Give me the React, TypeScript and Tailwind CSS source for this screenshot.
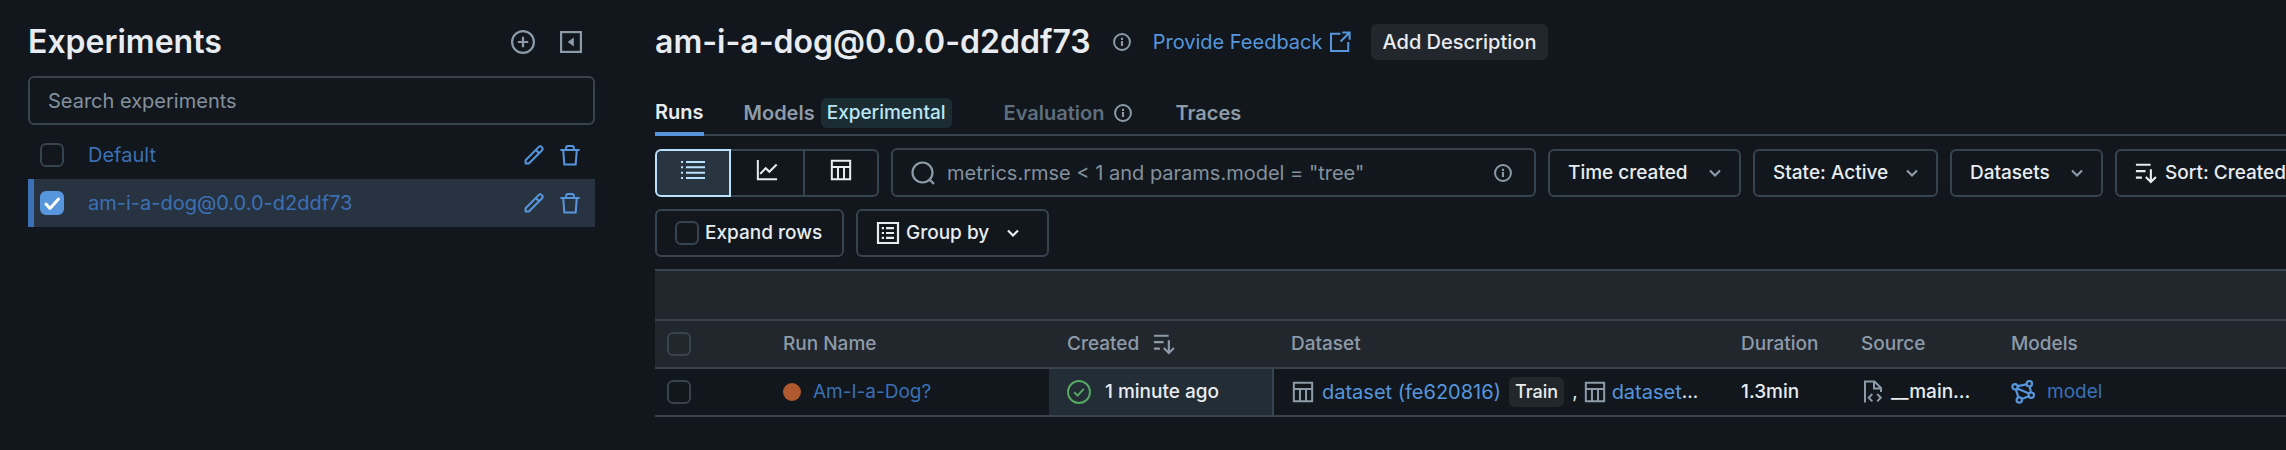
import React from "react";

type IconProps = { className?: string };

function Svg({ className, children }: IconProps & { children: React.ReactNode }) {
  return (
    <svg viewBox="0 0 24 24" fill="none" stroke="currentColor" strokeWidth={2.2} aria-hidden="true" className={`shrink-0 ${className ?? "size-6"}`}>
      {children}
    </svg>
  );
}

const PlusCircle = (p: IconProps) => (
  <Svg {...p}>
    <circle cx="12" cy="12" r="10.9" />
    <path d="M12 6.8v10.4M6.8 12h10.4" />
  </Svg>
);
const Collapse = (p: IconProps) => (
  <Svg {...p}>
    <rect x="2.1" y="2.1" width="19.8" height="19.8" />
    <path d="M14.8 7.4v9.2L8.600 12z" fill="currentColor" stroke="none" />
  </Svg>
);
const Pencil = (p: IconProps) => (
  <Svg {...p}>
    <path strokeLinejoin="round" d="M2.800 17.700 17 3.400a2.500 2.500 0 0 1 3.600 3.600L6.400 21.200H2.800zM14 6.500l3.500 3.500" />
  </Svg>
);
const Trash = (p: IconProps) => (
  <Svg {...p}>
    <path d="M1.5 6.500h21M7.8 6.500V4a1.800 1.800 0 0 1 1.800-1.800h4.800A1.800 1.800 0 0 1 16.200 4v2.500M4.600 6.500l1.200 15.800h12.400l1.200-15.800" />
  </Svg>
);
const Info = (p: IconProps) => (
  <Svg {...p}>
    <circle cx="12" cy="12" r="10.6" strokeWidth="2.6" />
    <path d="M12 10.8v6.4M12 6.4v2.8" strokeWidth="2.8" />
  </Svg>
);
const External = (p: IconProps) => (
  <Svg {...p}>
    <path d="M12.5 3H2.2v18.8H21V12M14.5 1.6h8v8M22 2.1 12.6 11.500" />
  </Svg>
);
const ListIcon = (p: IconProps) => (
  <Svg {...p}>
    <path strokeWidth="2" d="M5 3h19M5 8.300h19M5 13.700h19M5 19h19M0 3h2M0 8.300h2M0 13.700h2M0 19h2" />
  </Svg>
);
const Chart = (p: IconProps) => (
  <Svg {...p}>
    <path d="M2 1v21h21M4.600 16.200l6-6.200 4 4L22.500 6" />
  </Svg>
);
const TableIcon = (p: IconProps) => (
  <Svg {...p}>
    <path d="M2 2h20v20H2zM2 8.600h20M8.700 8.600V22M15.300 8.600V22" />
  </Svg>
);
const GroupIcon = (p: IconProps) => (
  <Svg {...p}>
    <path d="M2 2h20v20H2zM10 7.200h8M10 12h8M10 16.800h8M5.800 7.200H8M5.800 12H8M5.800 16.800H8" />
  </Svg>
);
const SearchIcon = (p: IconProps) => (
  <Svg {...p}>
    <circle cx="11.500" cy="11.500" r="10" />
    <path d="m18.600 18.600 4.400 4.400" />
  </Svg>
);
const Chevron = (p: IconProps) => (
  <Svg {...p}>
    <path strokeWidth="4.400" d="m2 7 10 10L22 7" />
  </Svg>
);
const SortDesc = (p: IconProps) => (
  <Svg {...p}>
    <path strokeWidth="2.300" d="M1 3h16M1 10h10.500M1 17h6.500M17.300 8v13.500M11.800 16.300l5.500 5.500 5.500-5.500" />
  </Svg>
);
const CheckCircle = (p: IconProps) => (
  <Svg {...p}>
    <circle cx="12" cy="12" r="11" strokeWidth="1.900" />
    <path strokeWidth="2" d="m7.200 12.200 3.400 3.400 6.200-6.800" />
  </Svg>
);
const FileCode = (p: IconProps) => (
  <Svg {...p}>
    <path strokeWidth="2" d="M4 22.500V1.500h9.500L20 8v4M13 1.500v7h7M11.300 14l-3.600 3.700 3.600 3.700M16.200 14l3.600 3.700-3.600 3.700" />
  </Svg>
);
const ModelIcon = (p: IconProps) => (
  <Svg {...p}>
    <circle cx="4" cy="6.800" r="2.700" />
    <circle cx="18.300" cy="3.700" r="2.700" />
    <circle cx="20.300" cy="15.200" r="2.700" />
    <circle cx="8.300" cy="20" r="2.700" />
    <path d="m6.600 6.200 9.100-1.900M18.700 6.400l1.200 6.100M4.900 9.400l2.500 8M6.200 8.400l11.900 5.200M10.800 19l7-2.800" />
  </Svg>
);

function Check({ label, checked = false, className = "" }: { label: string; checked?: boolean; className?: string }) {
  return (
    <span className="relative flex size-6 shrink-0">
      <input
        type="checkbox"
        aria-label={label}
        defaultChecked={checked}
        className={`peer size-6 appearance-none rounded-md border-2 border-[#37444f] checked:border-[#5796dc] checked:bg-[#5796dc] ${className}`}
      />
      <svg viewBox="0 0 24 24" fill="none" stroke="white" strokeWidth="3" strokeLinecap="round" strokeLinejoin="round" className="pointer-events-none absolute inset-0 hidden size-6 peer-checked:block">
        <path d="m6 13 4 4.500L18.500 8" />
      </svg>
    </span>
  );
}

function ExperimentRow({ name, selected = false }: { name: string; selected?: boolean }) {
  return (
    <li className={`flex h-12 items-center border-l-6 pr-3.5 pl-1.5 ${selected ? "border-[#3c70b4] bg-[#283341]" : "border-transparent"}`}>
      <Check label={`Select ${name}`} checked={selected} />
      <a href="#" className="ml-6 flex-1 text-[#3c70b4]">{name}</a>
      <button aria-label={`Rename ${name}`} className="text-[#5796dc]"><Pencil className="size-[22px]" /></button>
      <button aria-label={`Delete ${name}`} className="ml-3.5 text-[#5796dc]"><Trash className="size-[22px]" /></button>
    </li>
  );
}

function Dropdown({ label, width }: { label: string; width: string }) {
  return (
    <button className={`flex h-12 shrink-0 items-center justify-between rounded-md border-2 border-[#37444f] px-[18px] text-[19px] font-medium ${width}`}>
      {label}
      <Chevron className="size-3 text-[#8d9ba9]" />
    </button>
  );
}

export default function App() {
  return (
    <div className="flex min-h-screen overflow-hidden bg-[#11171c] font-[Inter,sans-serif] text-[20px] leading-6 text-[#e8ecf0]">
      <aside className="ml-7 w-[567px] shrink-0 pt-5">
        <div className="flex h-11 items-center pr-3">
          <h1 className="flex-1 text-[32px] leading-10 font-semibold">Experiments</h1>
          <button aria-label="Create experiment" className="text-[#8d9ba9]"><PlusCircle /></button>
          <button aria-label="Hide experiment list" className="ml-6 text-[#8d9ba9]"><Collapse /></button>
        </div>
        <input
          type="text"
          aria-label="Search experiments"
          placeholder="Search experiments"
          className="mt-3 h-[49px] w-full rounded-md border-2 border-[#37444f] px-[18px] placeholder:text-[#84919e]"
        />
        <ul className="mt-1.5">
          <ExperimentRow name="Default" />
          <ExperimentRow name="am-i-a-dog@0.0.0-d2ddf73" selected />
        </ul>
      </aside>

      <main className="ml-[60px] min-w-0 flex-1 overflow-hidden pt-5">
        <header className="flex h-11 items-center">
          <h2 className="text-[32px] leading-10 font-semibold">am-i-a-dog@0.0.0-d2ddf73</h2>
          <button aria-label="Experiment details" className="ml-[22px] text-[#8d9ba9]"><Info className="size-[18px]" /></button>
          <a href="#" className="ml-[22px] flex items-center gap-1.5 text-[#5796dc]">
            Provide Feedback
            <External className="size-[22px]" />
          </a>
          <button className="ml-5 h-9 rounded-md bg-[#22272e] px-3 font-medium">Add Description</button>
        </header>

        <nav className="mt-7 flex h-11 border-b-2 border-[#37444f] font-semibold text-[#8d9ba9]">
          <a href="#" className="-mb-0.5 flex items-center border-b-4 border-[#5796dc] text-[#e8ecf0]">Runs</a>
          <a href="#" className="ml-10 flex items-center gap-1.5">
            Models
            <span className="rounded-md bg-[#1b2c33] px-1.5 py-[3px] text-[19px] font-medium text-[#bae6f5]">Experimental</span>
          </a>
          <a href="#" className="ml-[52px] flex items-center gap-2.5 text-[#5f6e7d]">
            Evaluation
            <Info className="size-[18px] text-[#8d9ba9]" />
          </a>
          <a href="#" className="ml-[43px] flex items-center">Traces</a>
        </nav>

        <div className="mt-3 flex items-end gap-3">
          <div role="group" aria-label="View" className="flex h-12 w-56 shrink-0">
            <button aria-label="Table view" className="flex flex-1 justify-center rounded-l-md border-2 border-[#bae1fc] bg-[#283541] pt-2 text-[#bae1fc]"><ListIcon /></button>
            <button aria-label="Chart view" className="flex flex-1 justify-center border-y-2 border-[#37444f] pt-2"><Chart className="size-[22px]" /></button>
            <button aria-label="Artifact view" className="flex flex-1 justify-center rounded-r-md border-2 border-[#37444f] pt-2"><TableIcon className="size-[22px]" /></button>
          </div>
          <div className="flex h-[49px] w-[645px] shrink-0 items-center rounded-md border-2 border-[#37444f] px-[18px] text-[#8d9ba9]">
            <SearchIcon />
            <input type="text" aria-label="Search runs" placeholder={'metrics.rmse < 1 and params.model = "tree"'} className="ml-3 min-w-0 flex-1 placeholder:text-[#84919e]" />
            <button aria-label="Search syntax help" className="mr-1"><Info className="size-[18px]" /></button>
          </div>
          <Dropdown label="Time created" width="w-[193px]" />
          <Dropdown label="State: Active" width="w-[185px]" />
          <Dropdown label="Datasets" width="w-[153px]" />
          <button className="flex h-12 shrink-0 items-center gap-2 rounded-md border-2 border-[#37444f] px-[18px] text-[19px] font-medium whitespace-nowrap">
            <SortDesc className="size-[22px]" />
            Sort: Created
            <Chevron className="ml-3 size-3" />
          </button>
        </div>

        <div className="mt-3 flex gap-3 text-[19px]">
          <label className="flex h-12 w-[189px] items-center gap-1.5 rounded-md border-2 border-[#37444f] pl-[18px] font-medium">
            <Check label="Expand rows" className="border-[#2a343d]" />
            Expand rows
          </label>
          <button className="flex h-12 w-[193px] items-center rounded-md border-2 border-[#37444f] pl-[18px] font-medium">
            <GroupIcon className="size-6" />
            <span className="ml-1.5">Group by</span>
            <Chevron className="ml-[18px] size-3" />
          </button>
        </div>

        <table className="mt-3 w-full table-fixed border-collapse text-left text-[19px]">
          <colgroup>
            <col className="w-[128px]" />
            <col className="w-[266px]" />
            <col className="w-[224px]" />
            <col className="w-[450px]" />
            <col className="w-[120px]" />
            <col className="w-[150px]" />
            <col />
          </colgroup>
          <thead className="bg-[#22272e] text-[#8d9ba9]">
            <tr className="h-[50px] border-y-2 border-[#37444f]"><td colSpan={7} /></tr>
            <tr className="h-12 border-b-2 border-[#37444f] *:p-0 *:font-medium">
              <th className="pl-3!"><Check label="Select all runs" /></th>
              <th>Run Name</th>
              <th className="pl-[18px]!"><span className="flex items-center gap-3.5">Created <SortDesc className="size-[22px]" /></span></th>
              <th className="pl-[18px]!">Dataset</th>
              <th className="pl-[18px]!">Duration</th>
              <th className="pl-[18px]!">Source</th>
              <th className="pl-[18px]!">Models</th>
            </tr>
          </thead>
          <tbody>
            <tr className="h-12 border-b-2 border-[#37444f] *:p-0">
              <td className="pl-3!"><Check label="Select run Am-I-a-Dog?" /></td>
              <td>
                <span className="flex items-center gap-3">
                  <span className="size-[18px] rounded-full bg-[#b1592e]" />
                  <a href="#" className="text-[#3c70b4]">Am-I-a-Dog?</a>
                </span>
              </td>
              <td className="border-r-2 border-[#37444f] bg-[#232d36] pl-[18px]!">
                <span className="flex items-center gap-3.5 font-medium"><CheckCircle className="size-6 text-[#57a863]" />1 minute ago</span>
              </td>
              <td className="pl-[18px]!">
                <span className="flex items-center">
                  <TableIcon className="size-[22px] text-[#8d9ba9]" />
                  <a href="#" className="ml-2 text-[20px] text-[#5796dc]">dataset (fe620816)</a>
                  <span className="ml-2 rounded-md bg-[#22272b] px-1.5 py-[3px] text-[18px] font-medium">Train</span>
                  <span className="mr-1.5 ml-2">,</span>
                  <TableIcon className="size-[22px] text-[#8d9ba9]" />
                  <a href="#" className="ml-1.5 text-[20px] text-[#5796dc]">dataset</a>…
                </span>
              </td>
              <td className="pl-[18px]! font-medium">1.3min</td>
              <td className="pl-[18px]!"><span className="flex items-center gap-1.5 font-medium"><FileCode className="size-6 text-[#8d9ba9]" />__main…</span></td>
              <td className="pl-[18px]!"><a href="#" className="flex items-center gap-3 text-[#3c70b4]"><ModelIcon className="size-6 text-[#5796dc]" />model</a></td>
            </tr>
          </tbody>
        </table>
      </main>
    </div>
  );
}
